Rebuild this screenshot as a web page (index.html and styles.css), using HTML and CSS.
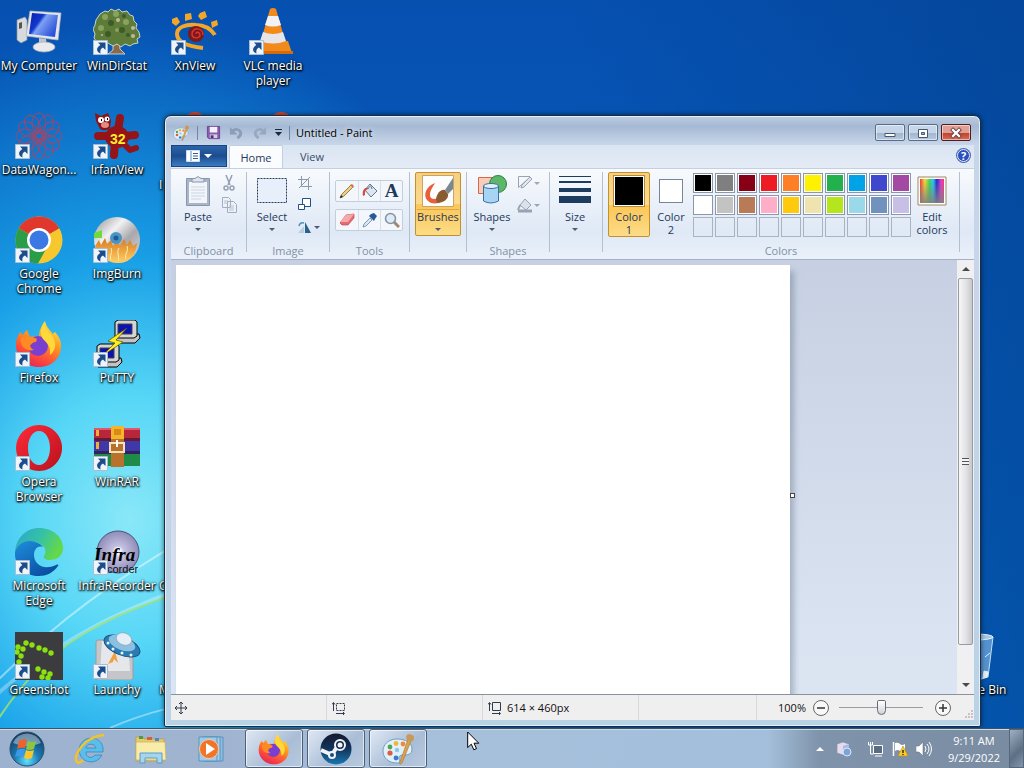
FILE: index.html
```
<!DOCTYPE html>
<html lang="en">
<head>
    <meta charset="utf-8">
    <title>Untitled - Paint</title>
    <link rel="stylesheet" href="styles.css">
</head>
<body>
<!-- shared artwork -->
<svg class="defs" aria-hidden="true">
    <defs>
        <linearGradient id="gFox" x1="0.8" y1="0" x2="0.3" y2="1">
            <stop offset="0" stop-color="#fff04a"/><stop offset="0.4" stop-color="#ff9a1f"/><stop offset="0.75" stop-color="#ff4a3a"/><stop offset="1" stop-color="#e0255c"/>
        </linearGradient>
        <linearGradient id="gScreen" x1="0" y1="0" x2="1" y2="0.6">
            <stop offset="0" stop-color="#0a1fae"/><stop offset="0.4" stop-color="#1238cc"/><stop offset="0.5" stop-color="#7fa0f4"/><stop offset="1" stop-color="#2a52d8"/>
        </linearGradient>
        <linearGradient id="gSilver" x1="0" y1="0" x2="1" y2="1">
            <stop offset="0" stop-color="#8c8c90"/><stop offset="0.35" stop-color="#f2f2f4"/><stop offset="0.6" stop-color="#a8a8ac"/><stop offset="1" stop-color="#dcdce0"/>
        </linearGradient>
        <linearGradient id="gFlame" x1="0" y1="0" x2="0" y2="1">
            <stop offset="0" stop-color="#d9791c"/><stop offset="1" stop-color="#ffd06a"/>
        </linearGradient>
        <linearGradient id="gOpera" x1="0" y1="0" x2="1" y2="1">
            <stop offset="0" stop-color="#ff2a3a"/><stop offset="1" stop-color="#b8121c"/>
        </linearGradient>
        <linearGradient id="gEdge" x1="0" y1="0" x2="1" y2="0.4">
            <stop offset="0" stop-color="#2aa6c8"/><stop offset="0.55" stop-color="#35c1a8"/><stop offset="1" stop-color="#62d84a"/>
        </linearGradient>
        <linearGradient id="gEdgeBlue" x1="0" y1="0" x2="0.7" y2="1">
            <stop offset="0" stop-color="#1f8fdc"/><stop offset="1" stop-color="#0a4ca0"/>
        </linearGradient>
        <radialGradient id="gInfra">
            <stop offset="0" stop-color="#fff"/><stop offset="0.3" stop-color="#c4c0e0"/><stop offset="1" stop-color="#8f8cb8"/>
        </radialGradient>
        <radialGradient id="gOrb" cx="0.5" cy="0.85" r="0.8">
            <stop offset="0" stop-color="#5fe0ff"/><stop offset="0.45" stop-color="#1c7cb4"/><stop offset="1" stop-color="#123e66"/>
        </radialGradient>
        <linearGradient id="gHue">
            <stop offset="0" stop-color="#f33"/><stop offset="0.2" stop-color="#fd3"/><stop offset="0.4" stop-color="#3d5"/><stop offset="0.55" stop-color="#2cf"/><stop offset="0.7" stop-color="#22c"/><stop offset="0.88" stop-color="#e3d"/><stop offset="1" stop-color="#f36"/>
        </linearGradient>
        <linearGradient id="gGrey" x1="0" y1="0" x2="0" y2="1">
            <stop offset="0" stop-color="#808080" stop-opacity="0"/><stop offset="1" stop-color="#808080" stop-opacity="0.9"/>
        </linearGradient>
        <linearGradient id="gSteam" x1="0" y1="0" x2="0" y2="1">
            <stop offset="0" stop-color="#14182c"/><stop offset="0.5" stop-color="#12355e"/><stop offset="1" stop-color="#1a78b0"/>
        </linearGradient>
        <symbol id="shortcut" viewBox="0 0 15 15">
            <path d="M.5.5h14v14H.5z" fill="#eef4fa" stroke="#a9bdd2"/>
            <path d="M5 2.5h7.500v7.500L10 7.600C7.500 9 7 10.500 7.500 13.500 3.500 12 2.500 8 7.300 5z" fill="#1c4c8c"/>
        </symbol>
        <symbol id="firefox" viewBox="0 0 48 48">
            <path d="M24 47C11 47 1 37 1 25c0-6 2-9 4-13l3 3c1-2 2-3 4-5l3 7c3-1 6-1 9 0 0-7 3-12 6-16 1 6 5 9 8 13l2-2c4 5 6 8 6 14C46 38 37 47 24 47z" fill="url(#gFox)"/>
            <circle cx="23" cy="26" r="10" fill="#7b3fd0"/>
            <path d="M6 18c5-2 10-2 16 1l-1 3c-3 0-5 2-6 4 1 2 2 3 4 4-4 1-8 0-11-3-2-3-3-6-2-9z" fill="#ff8a22"/>
            <path d="M29 3c1 7 7 10 10 16 3 7 0 13-4 16 1-9-3-12-7-16-4-5-2-11 1-16z" fill="#ffd83a"/>
        </symbol>
        <symbol id="palette" viewBox="0 0 32 32">
            <path d="M15 6C6 6 1 12 1 18c0 7 6 12 14 12 3 0 3-2 2-4s1-4 4-4c4 0 9 0 9-6 0-6-6-10-15-10z" fill="#e2f0fa" stroke="#6fa0c6"/>
            <circle cx="8" cy="20" r="2.600" fill="#e05a4a"/><circle cx="8" cy="14" r="2.400" fill="#4aa850"/>
            <circle cx="14" cy="10.500" r="2.400" fill="#f0b832"/><circle cx="21" cy="11" r="2.400" fill="#f08a3a"/>
            <circle cx="14" cy="25" r="2.400" fill="#3a7cd0"/><circle cx="15" cy="17" r="2.200" fill="#88c8e8"/>
            <path d="M26 6l3 2-9 22c-2 2-3 1-2-1z" fill="#dca24c" stroke="#a8722c" stroke-width=".6"/>
            <path d="M25 7c-2-4 0-6 3-6l4 2c1 3-1 5-3 6z" fill="#c79a5a"/>
        </symbol>
    </defs>
</svg>

<main class="desktop">
    <svg class="streaks" viewBox="0 0 240 240" aria-hidden="true">
        <g fill="none">
            <path d="M-5 195C50 140 110 90 240 20" stroke="#fff" stroke-opacity=".45" stroke-width="2"/>
            <path d="M-5 208C60 150 120 120 240 80" stroke="#fff" stroke-opacity=".3" stroke-width="4"/>
            <path d="M-5 236C50 150 110 122 240 88" stroke="#9be36c" stroke-opacity=".85" stroke-width="2"/>
            <path d="M110 240C150 222 190 215 240 205" stroke="#fff" stroke-opacity=".4" stroke-width="2"/>
        </g>
    </svg>

    <div class="icons">
        <div class="icon">
            <svg class="art" viewBox="0 0 48 48">
                <path d="M2 12l8-3 2 3v20l-6 3-4-3z" fill="#d8dade" stroke="#8f949c" stroke-width=".7"/>
                <path d="M4 15l3-1v6l-3 1z" fill="#555"/>
                <path d="M15 3l31 2-3 27-32-4z" fill="#e4e6ea" stroke="#b3b7be" stroke-width=".7"/>
                <path d="M17 5l26 2-3 22-26-3z" fill="url(#gScreen)"/>
                <path d="M24 30l7 1 1 7h-8z" fill="#c2c6cc"/>
                <ellipse cx="29" cy="39" rx="11" ry="5" fill="#e8eaee" stroke="#a9adb4" stroke-width=".7"/>
            </svg>
            <span class="name">My Computer</span>
        </div>
        <div class="icon">
            <svg class="art" viewBox="0 0 48 48">
                <path d="M20 27h6l1 14 5 5H15l5-4z" fill="#8c6a48" stroke="#dfe8ee" stroke-width=".8"/>
                <path d="M7 6l5-3 3 1 3-3 4 2 4-2 3 3 5-1 3 4 3 1 1 5 3 3-1 4 3 4 1 5-3 2 1 4-5 1-3 2-5-2-4 3-4-3-4 2-5-3-4 2-4-4-3 1-3-4 1-4-2-5 2-4 1-5z" fill="#5d7c3a" stroke="#d3e0d8" stroke-width=".9"/>
                <g fill="#89a35c"><circle cx="12" cy="9" r="3"/><circle cx="23" cy="6" r="3"/><circle cx="33" cy="14" r="3"/><circle cx="8" cy="20" r="3"/><circle cx="24" cy="22" r="2"/></g>
                <g fill="#3e5a28"><circle cx="18" cy="15" r="3"/><circle cx="29" cy="22" r="3"/><circle cx="15" cy="26" r="3"/><circle cx="31" cy="8" r="2"/><circle cx="35" cy="27" r="2"/></g>
                <g fill="#c3b896"><circle cx="40" cy="28" r="2"/><circle cx="40" cy="20" r="2"/><circle cx="25" cy="12" r="2"/><circle cx="9" cy="27" r="1"/></g>
                <use href="#shortcut" y="32" width="15" height="15"/>
            </svg>
            <span class="name">WinDirStat</span>
        </div>
        <div class="icon">
            <svg class="art" viewBox="0 0 48 48">
                <g fill="#f2a62a"><path d="M1 11l5-2 3 5-4 4-4-3z"/><path d="M14 6l6-1 1 6-7 2z"/><path d="M29 5l5-2 2 6-6 3-3-4z"/><path d="M40 14l6-2 1 5-6 3z"/></g>
                <path d="M32 40C14 38 6 33 6 26s9-10 19-9c9 0 15 4 19 10" fill="none" stroke="#f2a62a" stroke-width="4"/>
                <circle cx="25" cy="26" r="8" fill="#7a1a1c"/>
                <path d="M25 26c0-3 4-2 4 1 0 4-8 4-8-1 0-7 11-7 11 1" fill="none" stroke="#e0352a" stroke-width="1.500"/>
                <path d="M33 37l11-10M36 28l7 8" stroke="#24508c" stroke-width="1"/>
                <use href="#shortcut" y="32" width="15" height="15"/>
            </svg>
            <span class="name">XnView</span>
        </div>
        <div class="icon">
            <svg class="art" viewBox="0 0 48 48">
                <path d="M9 33h30l4 12H6z" fill="#f08a1a"/><path d="M6 43h38v3H6z" fill="#d86a0c"/>
                <path d="M21 1q3-2 6 0l10 35q-13 8-26 0z" fill="#f58a1c"/>
                <path d="M19 8h10l3 9q-8 3-16 0z" fill="#f2f2f4"/>
                <path d="M14 24q10 4 20 0l3 9q-13 5-26 0z" fill="#e6e6ea"/>
                <use href="#shortcut" y="32" width="15" height="15"/>
            </svg>
            <span class="name">VLC media player</span>
        </div>

        <div class="icon">
            <svg class="art" viewBox="0 0 48 48">
                <g fill="none" stroke="#c43c52" stroke-width=".8">
                    <circle cx="24" cy="24" r="7"/>
                    <g id="petals"><ellipse cx="24" cy="11" rx="7" ry="10"/><ellipse cx="24" cy="37" rx="7" ry="10"/><ellipse cx="11" cy="24" rx="10" ry="7"/><ellipse cx="37" cy="24" rx="10" ry="7"/></g>
                    <use href="#petals" transform="rotate(30 24 24)"/>
                    <use href="#petals" transform="rotate(60 24 24)"/>
                </g>
                <use href="#shortcut" y="32" width="15" height="15"/>
            </svg>
            <span class="name">DataWagon...</span>
        </div>
        <div class="icon">
            <svg class="art" viewBox="0 0 48 48">
                <g fill="none" stroke="#951417" stroke-width="8" stroke-linecap="round" stroke-linejoin="round">
                    <path d="M25 18l2-12M16 24H5M22 30l-1 13M32 24l10-1"/>
                    <path d="M31 32l6 6 6-2" stroke-width="6"/>
                </g>
                <ellipse cx="24" cy="25" rx="12" ry="11" fill="#951417"/>
                <path d="M2 1l6 3 7-3 3 7-1 8q-5 4-10 1L3 9z" fill="#8a1416"/>
                <circle cx="8" cy="8" r="3" fill="#fff"/><circle cx="14" cy="7" r="2.500" fill="#fff"/><path d="M8 8h1M14 7h1" stroke="#000" stroke-width="2"/>
                <ellipse cx="12" cy="13" rx="4" ry="3" fill="#e58a80"/>
                <text class="art-32" x="17" y="32">32</text>
                <use href="#shortcut" y="32" width="15" height="15"/>
            </svg>
            <span class="name">IrfanView</span>
        </div>
        <div class="icon">
            <svg class="art" viewBox="0 0 48 48"><circle cx="24" cy="12" r="12" fill="#d8452a"/></svg>
            <span class="name cut low">I</span>
        </div>
        <div class="icon">
            <svg class="art" viewBox="0 0 48 48"><circle cx="32" cy="12" r="12" fill="#d8452a"/></svg>
        </div>

        <div class="icon">
            <svg class="art" viewBox="0 0 48 48">
                <circle cx="24" cy="24" r="23.500" fill="#f7c82e"/>
                <path d="M24 24L3.600 12.300A23.500 23.500 0 0 1 44.400 12.300z" fill="#e0382c"/>
                <path d="M24 24l-20.400-11.700A23.500 23.500 0 0 0 23 47.500l10-18z" fill="#2b9c48"/>
                <circle cx="24" cy="24" r="12" fill="#fff"/><circle cx="24" cy="24" r="9.500" fill="#3a78e4"/>
                <use href="#shortcut" y="32" width="15" height="15"/>
            </svg>
            <span class="name">Google Chrome</span>
        </div>
        <div class="icon">
            <svg class="art" viewBox="0 0 48 48">
                <circle cx="24" cy="24" r="23" fill="url(#gSilver)"/>
                <path d="M1 17l8-3v8H1z" fill="#6ddc3a"/>
                <path d="M2 30l4-6 2 5 4-7 2 6 4-4 2 6 4-5 3 5 4-7 3 6 3-5 3 6 4-3q-2 20-19 20Q8 46 2 30z" fill="url(#gFlame)"/>
                <g stroke="#fff0a8" fill="none"><path d="M18 44c-2-5 2-7 0-12M25 45c2-5-2-8 1-13M33 43c-2-5 3-7 1-13"/></g>
                <circle cx="23" cy="22" r="6" fill="#4a94c4"/><circle cx="23" cy="22" r="2.500" fill="#1f5c94"/>
                <use href="#shortcut" y="32" width="15" height="15"/>
            </svg>
            <span class="name">ImgBurn</span>
        </div>
        <div class="icon"></div>
        <div class="icon"></div>

        <div class="icon">
            <svg class="art" viewBox="0 0 48 48"><use href="#firefox" width="48" height="48"/><use href="#shortcut" y="32" width="15" height="15"/></svg>
            <span class="name">Firefox</span>
        </div>
        <div class="icon">
            <svg class="art" viewBox="0 0 48 48">
                <g id="pc">
                    <path d="M23 17l3-3h20l1 4-5 5H23z" fill="#c4c4c4" stroke="#000"/>
                    <path d="M22 2l3-2h17l2 2v14l-3 2H22z" fill="#d4d4d4" stroke="#000"/>
                    <path d="M25 4h14v10H25z" fill="#0a12b4" stroke="#444"/>
                </g>
                <use href="#pc" x="-18" y="24"/>
                <path d="M34 8L15 21l7 2-13 13 21-14-7-2z" fill="#ffee1e" stroke="#5c5200" stroke-width=".7"/>
                <use href="#shortcut" y="32" width="15" height="15"/>
            </svg>
            <span class="name">PuTTY</span>
        </div>
        <div class="icon"></div>
        <div class="icon"></div>

        <div class="icon">
            <svg class="art" viewBox="0 0 48 48">
                <path fill-rule="evenodd" d="M24 1a23 23 0 1 0 .1 0zm0 6c7 0 11 8 11 17s-4 17-11 17-11-8-11-17S17 7 24 7z" fill="url(#gOpera)"/>
                <use href="#shortcut" y="32" width="15" height="15"/>
            </svg>
            <span class="name">Opera Browser</span>
        </div>
        <div class="icon">
            <svg class="art" viewBox="0 0 48 48">
                <path d="M1 4h46v13H1z" fill="#b8263c"/><path d="M1 17h46v13H1z" fill="#4038a8"/><path d="M1 30h46v12H1z" fill="#1e8c48"/>
                <path d="M1 14h46v3H1zM1 27h46v3H1z" fill="#2a1430" opacity=".6"/><path d="M1 4h46v2H1z" fill="#e0566a"/>
                <path d="M3 6h3v6H3zM3 18h3v7H3z" fill="#f0b038"/>
                <path d="M18 2h13v41H18z" fill="#b8722c"/><path d="M18 2h13v13H18z" fill="#f2b52c"/><path d="M21 5h7v6h-7z" fill="#d88c14"/>
                <path d="M17 19h14v9H17z" fill="none" stroke="#f4e2b8" stroke-width="2"/><path d="M24 16v7" stroke="#fff" stroke-width="2"/>
                <use href="#shortcut" y="32" width="15" height="15"/>
            </svg>
            <span class="name">WinRAR</span>
        </div>
        <div class="icon"></div>
        <div class="icon"></div>

        <div class="icon">
            <svg class="art" viewBox="0 0 48 48">
                <path d="M0 24C1 10 11 0 24 0c14 0 24 9 24 20 0 8-6 12-13 12-5 0-7-2-6-4 3-5 1-11-6-13C14 12 4 16 0 24z" fill="url(#gEdge)"/>
                <path d="M0 24c3-9 12-13 20-10 4 1 7 3 8 5-6-2-9 3-9 8 0 9 9 16 22 10 2-1 3 0 2 1-5 7-12 10-19 10C10 48-1 38 0 24z" fill="url(#gEdgeBlue)"/>
                <use href="#shortcut" y="32" width="15" height="15"/>
            </svg>
            <span class="name">Microsoft Edge</span>
        </div>
        <div class="icon">
            <svg class="art" viewBox="0 0 48 48">
                <circle cx="25" cy="24" r="21" fill="url(#gInfra)" stroke="#4c5478"/>
                <circle cx="25" cy="23" r="4" fill="#eef4ff"/>
                <text class="art-infra" x="1" y="33">Infra</text>
                <text class="art-corder" x="14" y="45">corder</text>
                <use href="#shortcut" y="32" width="15" height="15"/>
            </svg>
            <span class="name">InfraRecorder</span>
        </div>
        <div class="icon"><span class="art"></span><span class="name cut">C</span></div>
        <div class="icon"></div>

        <div class="icon">
            <svg class="art" viewBox="0 0 48 48">
                <path d="M0 0h48v48H0z" fill="#3c3c3e"/>
                <g fill="#8be010">
                    <circle cx="3" cy="15" r="2.700"/><circle cx="11" cy="11" r="2.700"/><circle cx="17" cy="13" r="2.700"/><circle cx="24" cy="16" r="2.700"/><circle cx="30" cy="18" r="2.700"/><circle cx="36" cy="21" r="2.700"/>
                    <circle cx="8" cy="17" r="2.700"/><circle cx="6" cy="24" r="2.700"/><circle cx="2" cy="20" r="2.700"/><circle cx="4" cy="30" r="2.700"/>
                    <circle cx="23" cy="37" r="2.700"/><circle cx="29" cy="40" r="2.700"/><circle cx="35" cy="42" r="2.700"/><circle cx="27" cy="45" r="2.700"/><circle cx="33" cy="46" r="2.700"/>
                </g>
                <use href="#shortcut" y="32" width="15" height="15"/>
            </svg>
            <span class="name">Greenshot</span>
        </div>
        <div class="icon">
            <svg class="art" viewBox="0 0 48 48">
                <path d="M3 10q0-2 2-2h33q2 0 2 2v36q0 2-2 2H5q-2 0-2-2z" fill="#c4c6ca" stroke="#9a9ca2"/>
                <path d="M9 9h26l2 30H7z" fill="#e6e7ea"/>
                <path d="M22 19l-7 13 5-2 1-3 4 4z" fill="#f0a040"/>
                <ellipse cx="29" cy="14" rx="19" ry="9" transform="rotate(22 29 14)" fill="#2a7cb4" stroke="#184c7c"/>
                <ellipse cx="29" cy="11" rx="14" ry="7" transform="rotate(22 29 11)" fill="#8cc0e0"/>
                <ellipse cx="31" cy="7" rx="8" ry="6" transform="rotate(22 31 7)" fill="#e4eef6" stroke="#8aa4b8" stroke-width=".7"/>
                <g fill="#e8f6ff"><circle cx="15" cy="11" r="1.500"/><circle cx="20" cy="17" r="1.500"/><circle cx="29" cy="21" r="1.500"/><circle cx="38" cy="23" r="1.500"/></g>
                <use href="#shortcut" y="32" width="15" height="15"/>
            </svg>
            <span class="name">Launchy</span>
        </div>
        <div class="icon"><span class="art"></span><span class="name cut">M</span></div>
    </div>

    <div class="icon recycle">
        <svg class="art" viewBox="0 0 48 48">
            <path d="M7 5h35l-5 40q-13 5-25 0z" fill="#7fb4e4" fill-opacity=".65" stroke="#c4e0f6"/>
            <ellipse cx="25" cy="5" rx="17" ry="3" fill="#a4c8e4" stroke="#e4f2fc"/>
            <path d="M34 25l5-4M33 39l4 1-1 5-4 1z" stroke="#e4f2fc" fill="#e8eef2"/>
        </svg>
        <span class="name">Recycle Bin</span>
    </div>

    <section class="window">
        <header class="titlebar">
            <svg class="app-icon" viewBox="0 0 32 32"><use href="#palette" width="32" height="32"/></svg>
            <i class="bar"></i>
            <button class="quick" aria-label="Save">
                <svg viewBox="0 0 16 16"><path d="M1.500 1.500h13v13H3l-1.500-1.500z" fill="#8a5cb0" stroke="#6a4490"/><path d="M4 2h8v6H4z" fill="#f2f0f8"/><path d="M4 10h8v4H4z" fill="#d4cce4"/><path d="M5 11h3v3H5z" fill="#4c3070"/></svg>
            </button>
            <button class="quick" aria-label="Undo">
                <svg viewBox="0 0 16 16"><path d="M4 6c7-4 12 3 5 8" fill="none" stroke="#8c9eb6" stroke-width="3"/><path d="M1 2v8h8z" fill="#8c9eb6"/></svg>
            </button>
            <button class="quick" aria-label="Redo">
                <svg viewBox="0 0 16 16"><path d="M12 6C5 2 0 9 7 14" fill="none" stroke="#98a9bf" stroke-width="3"/><path d="M15 2v8H7z" fill="#98a9bf"/></svg>
            </button>
            <button class="quick customize" aria-label="Customize Quick Access Toolbar">
                <svg viewBox="0 0 8 8"><path d="M0 0h7v1H0zM0 3h7L3.500 7z" fill="#1c2838"/></svg>
            </button>
            <i class="bar"></i>
            <h1>Untitled - Paint</h1>
            <div class="caption">
                <button aria-label="Minimize"><svg viewBox="0 0 16 14"><path d="M3 7.500h10v3H3z" fill="#fff" stroke="#46566e"/></svg></button>
                <button aria-label="Maximize"><svg viewBox="0 0 16 14"><path fill-rule="evenodd" d="M3.500 3.500h9v8h-9zM6.500 6.500h3v2h-3z" fill="#fff" stroke="#46566e"/></svg></button>
                <button class="close" aria-label="Close"><svg viewBox="0 0 16 14"><path d="M5 4l6 6M11 4l-6 6" stroke="#5c3034" stroke-width="4" stroke-linecap="square"/><path d="M5 4l6 6M11 4l-6 6" stroke="#fff" stroke-width="2.400" stroke-linecap="square"/></svg></button>
            </div>
        </header>

        <nav class="tabs">
            <button class="file-tab" aria-label="Paint menu">
                <svg viewBox="0 0 26 12"><path d="M.5.500h13v11H.5z" fill="#fff" stroke="#cddcf0"/><path d="M5 1v10" stroke="#5a8cc8"/><path d="M7 3.500h5M7 6h5M7 8.500h5" stroke="#2c5c9c"/><path d="M18 4h8l-4 4z" fill="#fff"/></svg>
            </button>
            <button class="tab active">Home</button>
            <button class="tab">View</button>
            <button class="help" aria-label="Help">?</button>
        </nav>

        <div class="ribbon">
            <div class="group clipboard">
                <div class="tools">
                    <button class="big">
                        <svg viewBox="0 0 32 32"><path d="M4.500 3.500h23v27h-23z" fill="#a9b6c8" stroke="#8796ac"/><path d="M7 7h18v21H7z" fill="#f2f5fa"/><path d="M9 12h14M9 15h14M9 18h14M9 21h14M9 24h10" stroke="#ccd5e2"/><path d="M10 7V4l4-1q2-3 4 0l4 1v3z" fill="#dfe5ee" stroke="#8796ac"/></svg>
                        <span>Paste</span><i class="arrow"></i>
                    </button>
                    <div class="stack">
                        <button aria-label="Cut"><svg viewBox="0 0 16 16"><path d="M5 0l4 10M11 0L7 10" stroke="#94a0b2" stroke-width="1.500"/><circle cx="5" cy="13" r="2" fill="none" stroke="#94a0b2" stroke-width="1.500"/><circle cx="11" cy="13" r="2" fill="none" stroke="#94a0b2" stroke-width="1.500"/></svg></button>
                        <button aria-label="Copy"><svg viewBox="0 0 16 16"><path d="M1.500.500h6l2 2v8h-8zM6.500 4.500h6l3 3v8h-9z" fill="#eef2f8" stroke="#a2aebf"/><path d="M3 4h4M3 6h3M8 9h5M8 11h5M8 13h5" stroke="#b8c2d0"/></svg></button>
                    </div>
                </div>
                <div class="caption-text">Clipboard</div>
            </div>

            <div class="group image">
                <div class="tools">
                    <button class="big">
                        <svg viewBox="0 0 32 32"><path d="M1.500 3.500h29v24h-29z" fill="#e6effa" stroke="#243c5c" stroke-dasharray="2 1"/></svg>
                        <span>Select</span><i class="arrow"></i>
                    </button>
                    <div class="stack">
                        <button aria-label="Crop"><svg viewBox="0 0 16 16"><path d="M4.500 1v10.500H15M1 4.500h10.500V15M2 13L13 2" fill="none" stroke="#8b98ab"/></svg></button>
                        <button aria-label="Resize"><svg viewBox="0 0 16 16"><path d="M5.500 1.500h8v8h-8z" fill="#fff" stroke="#22508a"/><path d="M1.500 7.500h6v5h-6z" fill="#fff" stroke="#22508a"/></svg></button>
                        <button class="wide" aria-label="Rotate"><svg viewBox="0 0 16 16"><path d="M1 14h6V7z" fill="#b9cde0"/><path d="M8 14h6L8 3z" fill="#28628c"/><path d="M2 7q1-4 5-3" fill="none" stroke="#4a94c0" stroke-width="1.500"/></svg><i class="arrow"></i></button>
                    </div>
                </div>
                <div class="caption-text">Image</div>
            </div>

            <div class="group drawing">
                <div class="tools rows">
                    <div class="row">
                        <button aria-label="Pencil"><svg viewBox="0 0 16 16"><path d="M1 15l2-4 9-9 2 2-9 9z" fill="#f2d078" stroke="#7a6648" stroke-width=".8"/><path d="M1 15l1-3 2 2z" fill="#222"/><path d="M11 2l2-1 2 2-1 2z" fill="#c47a5c"/></svg></button>
                        <button aria-label="Fill with color"><svg viewBox="0 0 16 16"><path d="M8 1l7 7-6 6-6-7z" fill="#dbe6f2" stroke="#66788e"/><path d="M6 6q3-6 4 0" fill="none" stroke="#66788e"/><path d="M6 5C2 4 0 8 1 13l2-1c0-3 0-5 3-6z" fill="#d04c48"/></svg></button>
                        <button class="text-tool" aria-label="Text">A</button>
                    </div>
                    <div class="row">
                        <button aria-label="Eraser"><svg viewBox="0 0 16 16"><path d="M1 11l6-8 8-1v4l-6 7H3z" fill="#e86a70" stroke="#c04c54" stroke-width=".7"/><path d="M1 10l6-7 8-1-6 8z" fill="#f7a8aa"/></svg></button>
                        <button aria-label="Color picker"><svg viewBox="0 0 16 16"><path d="M1 15l1-3 6-6 2 2-6 6z" fill="#d6e8f4" stroke="#6a84a0" stroke-width=".8"/><path d="M7 4l5 5 1-2 2-3-3-3-3 1z" fill="#28589c"/></svg></button>
                        <button aria-label="Magnifier"><svg viewBox="0 0 16 16"><path d="M10 10l5 5" stroke="#a08a6a" stroke-width="3"/><circle cx="6.500" cy="6.500" r="5" fill="#dcebf6" stroke="#8894a4" stroke-width="1.600"/></svg></button>
                    </div>
                </div>
                <div class="caption-text">Tools</div>
            </div>

            <div class="group brushes">
                <div class="tools">
                    <button class="big chosen split">
                        <svg viewBox="0 0 32 32"><path d="M.5.500h31v31H.5z" fill="#fdfdfd" stroke="#c8a468"/><path d="M13 8C4 11 1 20 5 25c4 5 12 4 15 1l-4-3c-4 2-8 1-8-3 0-5 3-8 5-12z" fill="#e8603a"/><path d="M14 24c1-6 5-10 9-9l3 4c1 5-5 9-11 9z" fill="#8a5a30"/><path d="M23 15L31 3v11l-5 5z" fill="#7a8894"/></svg>
                        <span>Brushes</span><i class="arrow"></i>
                    </button>
                </div>
            </div>

            <div class="group shapes">
                <div class="tools">
                    <button class="big">
                        <svg viewBox="0 0 32 32"><path d="M2.500 2.500h16v16h-16z" fill="#f8cdb8" stroke="#d8684a"/><circle cx="22" cy="9" r="8.500" fill="#5cb868" stroke="#2c8444"/><path d="M7.500 11v15q7 4 15 0V11z" fill="#a8d4f4" stroke="#3a6ea8"/><ellipse cx="15" cy="11" rx="7.500" ry="2.500" fill="#e2f2fc" stroke="#3a6ea8"/></svg>
                        <span>Shapes</span><i class="arrow"></i>
                    </button>
                    <div class="stack faded">
                        <button class="wide" aria-label="Outline"><svg viewBox="0 0 16 16"><path d="M13 1.500H1.500v11L12 3" fill="none" stroke="#98a4b4"/><path d="M4 13l1-3 8-8 2 2-8 8z" fill="#e2e7ee" stroke="#98a4b4"/></svg><i class="arrow"></i></button>
                        <button class="wide" aria-label="Fill"><svg viewBox="0 0 16 16"><path d="M8 2l6 6-5 5-6-5z" fill="#dce2ea" stroke="#98a4b4"/><path d="M1 14h14" stroke="#98a4b4" stroke-width="3"/><path d="M3 8l-2 5" stroke="#98a4b4" stroke-width="2"/></svg><i class="arrow"></i></button>
                    </div>
                </div>
                <div class="caption-text">Shapes</div>
            </div>

            <div class="group size">
                <div class="tools">
                    <button class="big">
                        <svg viewBox="0 0 32 32"><path d="M0 1h32v1H0zM0 6h32v2H0zM0 13h32v4H0zM0 21h32v7H0z" fill="#1e3c60"/></svg>
                        <span>Size</span><i class="arrow"></i>
                    </button>
                </div>
            </div>

            <div class="group colors">
                <div class="tools">
                    <button class="big chosen"><i class="swatch black"></i><span>Color<br>1</span></button>
                    <button class="big second"><i class="swatch white"></i><span>Color<br>2</span></button>
                    <div class="palette">
                        <button style="background:#000"></button><button style="background:#7f7f7f"></button><button style="background:#880015"></button><button style="background:#ed1c24"></button><button style="background:#ff7f27"></button><button style="background:#fff200"></button><button style="background:#22b14c"></button><button style="background:#00a2e8"></button><button style="background:#3f48cc"></button><button style="background:#a349a4"></button>
                        <button style="background:#fff"></button><button style="background:#c3c3c3"></button><button style="background:#b97a57"></button><button style="background:#ffaec9"></button><button style="background:#ffc90e"></button><button style="background:#efe4b0"></button><button style="background:#b5e61d"></button><button style="background:#99d9ea"></button><button style="background:#7092be"></button><button style="background:#c8bfe7"></button>
                        <button class="empty"></button><button class="empty"></button><button class="empty"></button><button class="empty"></button><button class="empty"></button><button class="empty"></button><button class="empty"></button><button class="empty"></button><button class="empty"></button><button class="empty"></button>
                    </div>
                    <button class="big edit">
                        <svg viewBox="0 0 32 32"><path d="M2 2h28v28H2z" fill="#fff" stroke="#a0885c"/><path d="M4 4h24v24H4z" fill="url(#gHue)"/><path d="M4 4h24v24H4z" fill="url(#gGrey)"/></svg>
                        <span>Edit<br>colors</span>
                    </button>
                </div>
                <div class="caption-text">Colors</div>
            </div>
        </div>

        <div class="work">
            <div class="canvas-area">
                <div class="paper"><i class="handle"></i></div>
            </div>
            <div class="scrollbar">
                <i class="up"></i>
                <div class="thumb"><i class="grip"></i></div>
                <i class="down"></i>
            </div>
        </div>

        <footer class="status">
            <div class="cell"><svg viewBox="0 0 14 14"><path d="M7 1v12M1 7h12M5 3l2-2 2 2M5 11l2 2 2-2M3 5L1 7l2 2M11 5l2 2-2 2" fill="none" stroke="#333a4c"/></svg></div>
            <div class="cell"><svg viewBox="0 0 14 14"><path d="M4.500 2.500h8v7h-8z" fill="none" stroke="#333a4c" stroke-dasharray="2 1"/><path d="M1.500 10V2M0 3.500l1.500-2L3 3.500M4 12.500h8M11 11l1.500 1.500L11 14" fill="none" stroke="#333a4c"/></svg></div>
            <div class="cell"><svg viewBox="0 0 14 14"><path d="M4.500 1.500h8v8h-8z" fill="none" stroke="#333a4c"/><path d="M1.500 10V2M0 3.500l1.500-2L3 3.500M4 12.500h8M11 11l1.500 1.500L11 14" fill="none" stroke="#333a4c"/></svg>614 × 460px</div>
            <div class="cell last"></div>
            <div class="zoom">
                <label for="zoom">100%</label>
                <button class="round" aria-label="Zoom out"><svg viewBox="0 0 16 16"><circle cx="8" cy="8" r="7.500" fill="#f8f8f8" stroke="#666"/><path d="M4 8h8" stroke="#333" stroke-width="1.500"/></svg></button>
                <input type="range" id="zoom" min="0" max="100" value="50">
                <button class="round" aria-label="Zoom in"><svg viewBox="0 0 16 16"><circle cx="8" cy="8" r="7.500" fill="#f8f8f8" stroke="#666"/><path d="M4 8h8M8 4v8" stroke="#333" stroke-width="1.500"/></svg></button>
                <svg class="corner" viewBox="0 0 10 10"><path d="M7 1h2v2H7zM4 4h2v2H4zM7 4h2v2H7zM1 7h2v2H1zM4 7h2v2H4zM7 7h2v2H7z" fill="#d0c0c4"/></svg>
            </div>
        </footer>
    </section>
</main>

<footer class="taskbar">
    <button class="start" aria-label="Start">
        <svg viewBox="0 0 36 36">
            <circle cx="18" cy="18" r="17" fill="url(#gOrb)" stroke="#2c4c6c"/>
            <path d="M4 12a15 15 0 0 1 28 0q-14 6-28 0z" fill="#fff" fill-opacity=".4"/>
            <path d="M10 10q4-3 8-1l-2 8q-4-1-8 1z" fill="#f0602a"/><path d="M19 10q4 2 8 0l-2 8q-4 2-8 0z" fill="#8cc63e"/>
            <path d="M8 19q4-2 8-1l-2 8q-4-2-8 0z" fill="#3a9ae8"/><path d="M17 19q4 2 8 0l-2 8q-4 2-8 0z" fill="#fcc62a"/>
        </svg>
    </button>
    <button class="pin" aria-label="Internet Explorer">
        <svg viewBox="0 0 32 32"><path d="M17 5a12 12 0 1 0 11 17h-7c-3 4-9 3-9-3h17C30 11 25 5 17 5zm-5 10c1-5 9-5 10 0z" fill="#5cbcea" stroke="#2a84bc" stroke-width=".7" fill-rule="evenodd"/><path d="M3 29C-2 22 12 3 30 2M3 29c2 2 4 0 6-2" fill="none" stroke="#f2c22c" stroke-width="2.500"/></svg>
    </button>
    <button class="pin" aria-label="Windows Explorer">
        <svg viewBox="0 0 32 32"><path d="M1 4h7l1 2h20v22H1z" fill="#e8cc6c" stroke="#b89c40" stroke-width=".7"/><path d="M4 3h4v3H4z" fill="#4a9c48"/><path d="M12 4h5v3h-5z" fill="#d4603c"/><path d="M20 5h4v3h-4z" fill="#4a88d0"/><path d="M1 9h29l1 18H1z" fill="#f8ecaa" stroke="#c8b05c" stroke-width=".7"/><path d="M5 30V20h22v10h-5v-5H10v5z" fill="#a4d4f0" stroke="#5c9cc4"/></svg>
    </button>
    <button class="pin" aria-label="Windows Media Player">
        <svg viewBox="0 0 32 32"><path d="M8 4h18v24H8z" fill="#8cbce0" stroke="#5a94c0"/><path d="M5 4h18v24H5z" fill="#a8d0ec" stroke="#5a94c0"/><path d="M2 4h18v24H2z" fill="#9cccec" stroke="#5a94c0"/><circle cx="12" cy="16" r="9.500" fill="#f0742a" stroke="#f8c8a0"/><path d="M9 10l9 6-9 6z" fill="#fff"/></svg>
    </button>
    <button class="task" aria-label="Firefox"><svg viewBox="0 0 48 48"><use href="#firefox" width="48" height="48"/></svg></button>
    <button class="task" aria-label="Steam">
        <svg viewBox="0 0 32 32"><circle cx="16" cy="16" r="15.500" fill="url(#gSteam)"/><path d="M1 17l9 4a4 4 0 0 1 3-1l4-6" fill="none" stroke="#f2f4f8" stroke-width="4"/><circle cx="20" cy="12" r="5" fill="#14284a" stroke="#f2f4f8" stroke-width="2"/><circle cx="20" cy="12" r="2.500" fill="#f2f4f8"/><circle cx="12" cy="22" r="4" fill="#f2f4f8"/><circle cx="12" cy="22" r="2" fill="#1a4c7c"/></svg>
    </button>
    <button class="task" aria-label="Paint"><svg viewBox="0 0 32 32"><use href="#palette" width="32" height="32"/></svg></button>

    <div class="tray">
        <svg class="chevron" viewBox="0 0 8 5"><path d="M0 5l4-4 4 4z" fill="#fff"/></svg>
        <svg viewBox="0 0 16 16"><path d="M1 3l6-2 6 2v9l-6 2-6-2z" fill="#e4dcec" stroke="#8a8cb0" stroke-width=".7"/><path d="M7 5v9l6-2V3z" fill="#a8bce0"/><circle cx="11" cy="11" r="4" fill="#7ca4d8" stroke="#d8e8f8"/></svg>
        <i class="gap"></i>
        <svg viewBox="0 0 16 16"><path d="M5.500 4.500h9v8h-9z" fill="#5c6c80" stroke="#fff"/><path d="M7 15h7M2.500 1v3M.5 1v3h4V1M2.500 4v9h3" fill="none" stroke="#fff"/></svg>
        <svg viewBox="0 0 16 16"><path d="M1.500 1v14" stroke="#fff" stroke-width="1.500"/><path d="M3 2q3-1 5 1t5 0v7q-3 2-5 0t-5 0z" fill="#fff"/><path d="M11 5l5 10H6z" fill="#fccc28" stroke="#b88c10" stroke-width=".6"/><path d="M11 9v3M11 13v1" stroke="#222" stroke-width="1.400"/></svg>
        <svg viewBox="0 0 16 16"><path d="M0 5h3l4-4v14l-4-4H0z" fill="#fff" stroke="#5a6a7e" stroke-width=".5"/><path d="M9 5q2 3 0 6M11 3q4 5 0 10M13 1q5 7 0 14" fill="none" stroke="#fff"/></svg>
        <time class="clock">9:11 AM<br>9/29/2022</time>
        <button class="show-desktop" aria-label="Show desktop"></button>
    </div>
</footer>

<svg class="pointer" viewBox="0 0 13 20" aria-hidden="true"><path d="M.7 1v15.500l3.600-3.300 2.500 5.600 2.700-1.200-2.500-5.400h4.800z" fill="#fff" stroke="#000"/></svg>
</body>
</html>
```
FILE: styles.css
```
* {
    box-sizing: border-box;
}
body {
    margin: 0;
    height: 100vh;
    display: flex;
    flex-direction: column;
    overflow: hidden;
    font: 11px/13px "Open Sans", "Noto Sans", sans-serif;
    color: #1e395b;
}
button {
    margin: 0;
    padding: 0;
    border: 0;
    background: none;
    font: inherit;
    color: inherit;
}
svg {
    display: block;
}
.defs {
    position: absolute;
    width: 0;
    height: 0;
}

/* desktop */
.desktop {
    position: relative;
    flex: 1;
    min-height: 0;
    overflow: hidden;
    background:
        radial-gradient(ellipse 420px 500px at 130px 520px, #8ae8f8 0%, #56d6f6 25%, rgba(28, 172, 238, 0.85) 52%, rgba(10, 120, 214, 0) 100%),
        linear-gradient(100deg, rgba(0, 0, 0, 0) 50%, rgba(0, 50, 110, 0.4) 100%),
        linear-gradient(#0650b0, #0668d0);
}
.streaks {
    position: absolute;
    left: 0;
    bottom: 0;
    width: 240px;
    height: 240px;
}
.icons {
    position: absolute;
    left: 0;
    top: 0;
    display: grid;
    grid-template-columns: repeat(4, 78px);
    grid-auto-rows: 104px;
}
.icon {
    padding-top: 8px;
    display: flex;
    flex-direction: column;
    align-items: center;
}
.art {
    width: 48px;
    height: 48px;
    flex: none;
}
.name {
    margin-top: 2px;
    font-size: 12px;
    line-height: 15px;
    text-align: center;
    color: #fff;
    text-shadow: 0 1px 2px #000, 1px 1px 2px #000, 0 0 3px rgba(0, 0, 0, 0.7);
}
.cut {
    align-self: flex-start;
    padding-left: 3px;
}
.low {
    margin-top: 17px;
}
.art-32 {
    font: bold 14px "Liberation Sans", sans-serif;
    fill: #ffee2a;
}
.art-infra {
    font: italic bold 19px "Liberation Serif", serif;
    fill: #000;
}
.art-corder {
    font: 11px "Liberation Sans", sans-serif;
    fill: #111;
}
.recycle {
    position: absolute;
    right: 10px;
    bottom: 0;
    width: 78px;
    height: 104px;
}

/* window */
.window {
    position: absolute;
    left: 164px;
    right: 43px;
    top: 115px;
    bottom: 1px;
    padding: 0 6px 6px;
    display: flex;
    flex-direction: column;
    border: 1px solid #1c2c40;
    border-radius: 7px 7px 2px 2px;
    background: linear-gradient(#bccde0, #a6bad5 10px, #c8d6e9 29px, #c8d4ea 200px, #b8d2e6);
    box-shadow: inset 0 0 0 1px #e6f0fa, 0 0 5px rgba(0, 0, 0, 0.6);
}
.titlebar {
    height: 29px;
    flex: none;
    display: flex;
    align-items: center;
    padding: 4px 3px 0 2px;
    gap: 6px;
}
.app-icon {
    width: 16px;
    height: 16px;
    margin-right: 2px;
}
.bar {
    width: 1px;
    height: 14px;
    background: #6f86a4;
}
.quick {
    padding-left: 2px;
}
.quick svg {
    width: 15px;
    height: 15px;
}
.customize svg {
    width: 8px;
    height: 8px;
}
.titlebar h1 {
    margin: 0;
    font-size: 11px;
    font-weight: normal;
    color: #000;
    text-shadow: 0 0 6px #fff;
}
.caption {
    margin-left: auto;
    display: flex;
    gap: 3px;
}
.caption button {
    width: 30px;
    height: 17px;
    display: flex;
    justify-content: center;
    align-items: center;
    border: 1px solid #586c88;
    border-radius: 2px;
    background: linear-gradient(#c6d6e8 50%, #9fb4ce 50%, #b6c9de);
    box-shadow: inset 0 0 0 1px rgba(255, 255, 255, 0.5);
}
.caption svg {
    width: 16px;
    height: 14px;
}
.caption .close {
    border-color: #501c1c;
    background: linear-gradient(#e0a096 50%, #c03c28 50%, #d4705c);
}

.tabs {
    height: 23px;
    flex: none;
    display: flex;
    align-items: stretch;
    background: linear-gradient(#dae5f2, #e3ebf6);
    color: #3c4c64;
}
.file-tab {
    width: 56px;
    margin: 0 2px 1px 0;
    display: flex;
    justify-content: center;
    align-items: center;
    border: 1px solid #1c4480;
    background: linear-gradient(#2c64a8, #1c4c90 50%, #3a7cc0);
}
.file-tab svg {
    width: 26px;
    height: 12px;
}
.tab {
    width: 54px;
    margin-right: 2px;
}
.tab.active {
    border: 1px solid #c0cfe2;
    border-bottom: 0;
    border-radius: 2px 2px 0 0;
    background: #fafcfe;
    color: #1e395b;
}
.help {
    align-self: center;
    width: 13px;
    height: 13px;
    margin: 0 4px 2px auto;
    border: 1px solid #e0ecff;
    border-radius: 50%;
    background: #2c50c0;
    box-shadow: 0 0 0 1px #4c68b0;
    font-size: 11px;
    line-height: 11px;
    font-weight: bold;
    color: #fff;
}

.ribbon {
    height: 92px;
    flex: none;
    display: flex;
    padding-top: 3px;
    border-top: 1px solid #c4d0e0;
    border-bottom: 1px solid #a3b1c4;
    background: linear-gradient(#f8fafd, #e9f0f9 40%, #dfe8f5 70%, #eaf1fa);
}
.group {
    flex: none;
    height: 80px;
    border-right: 1px solid #b4c0d2;
}
.tools {
    height: 71px;
    display: flex;
    align-items: flex-start;
}
.caption-text {
    line-height: 15px;
    text-align: center;
    color: #8290a6;
}
.big {
    width: 46px;
    display: flex;
    flex-direction: column;
    align-items: center;
    border: 1px solid transparent;
    border-radius: 2px;
    padding: 2px 0 0;
}
.big svg {
    width: 32px;
    height: 32px;
}
.big span {
    margin-top: 3px;
}
.arrow {
    border: 3px solid transparent;
    border-top-color: #4c5c74;
    border-bottom: 0;
}
.big .arrow {
    margin: 5px 0 4px;
}
.chosen {
    border-color: #c29228;
    background: linear-gradient(#f6cf80, #fcd98c 50%, #fcc656 51%, #fcdc88);
}
.split span {
    margin-top: 2px;
    border-top: 1px solid #dca84c;
}
.stack {
    display: flex;
    flex-direction: column;
    gap: 6px;
    padding-top: 3px;
}
.stack svg {
    width: 16px;
    height: 16px;
}
.stack .wide {
    display: flex;
    align-items: center;
    gap: 1px;
}
.faded .arrow {
    opacity: 0.5;
}
.clipboard {
    width: 76px;
}
.clipboard .tools {
    padding-left: 4px;
}
.image {
    width: 83px;
}
.image .tools,
.shapes .tools,
.size .tools {
    padding-left: 2px;
}
.image .stack,
.shapes .stack {
    padding-left: 2px;
}
.drawing {
    width: 80px;
}
.rows {
    flex-direction: column;
    gap: 7px;
    padding: 8px 0 0 5px;
}
.row {
    display: flex;
    border: 1px solid #c3cedd;
    border-radius: 2px;
    background: #f3f7fc;
}
.row button {
    width: 22px;
    height: 20px;
    display: flex;
    justify-content: center;
    align-items: center;
    border-left: 1px solid #d6deea;
}
.row button:first-child {
    border-left: 0;
}
.row svg {
    width: 16px;
    height: 16px;
}
.row .text-tool {
    font: bold 19px/20px "Liberation Serif", serif;
}
.brushes {
    width: 57px;
}
.brushes .tools {
    padding-left: 5px;
}
.shapes {
    width: 83px;
}
.size {
    width: 53px;
}
.colors {
    width: 357px;
}
.colors .tools {
    padding-left: 5px;
}
.colors .big {
    width: 42px;
}
.swatch {
    width: 32px;
    height: 32px;
    border: 1px solid #b0883c;
    background: #000;
    box-shadow: inset 0 0 0 1px #fff;
}
.swatch.white {
    width: 24px;
    height: 24px;
    margin: 4px;
    border-color: #77859a;
    background: #fff;
}
.palette {
    display: grid;
    grid-template-columns: repeat(10, 20px);
    grid-auto-rows: 20px;
    gap: 2px;
    margin: 1px 0 0 1px;
}
.palette button {
    border: 1px solid #8c98aa;
    box-shadow: inset 0 0 0 1px #fff;
}
.palette .empty {
    border-color: #a8b4c4;
    box-shadow: none;
}

.work {
    flex: 1;
    min-height: 0;
    display: flex;
}
.canvas-area {
    flex: 1;
    overflow: hidden;
    background: linear-gradient(#c6d0e2, #dce6f3);
}
.paper {
    position: relative;
    width: 614px;
    height: 460px;
    margin: 5px;
    background: #fff;
    box-shadow: 4px 6px 6px rgba(90, 105, 130, 0.4);
}
.handle {
    position: absolute;
    right: -5px;
    top: 50%;
    width: 5px;
    height: 5px;
    margin-top: -2px;
    border: 1px solid #444;
    background: #fff;
}
.scrollbar {
    width: 17px;
    display: flex;
    flex-direction: column;
    align-items: center;
    background: #f0f0f2;
}
.up,
.down {
    margin: 7px 0;
    border: 4px solid transparent;
    border-top: 0;
    border-bottom-color: #4a4a4a;
}
.down {
    margin-top: 38px;
    border-top: 4px solid #4a4a4a;
    border-bottom: 0;
}
.thumb {
    flex: 1;
    width: 15px;
    display: flex;
    justify-content: center;
    align-items: center;
    border: 1px solid #979ba2;
    border-radius: 2px;
    background: linear-gradient(90deg, #f6f6f6, #e4e4e6 50%, #c6c8cc);
}
.grip {
    width: 7px;
    height: 7px;
    background: repeating-linear-gradient(#555 0 1px, #f4f4f4 1px 3px);
}

.status {
    height: 26px;
    flex: none;
    display: flex;
    border-top: 1px solid #8a929e;
    background: #f0eff0;
    color: #111;
}
.cell {
    width: 156px;
    display: flex;
    align-items: center;
    gap: 5px;
    padding-left: 3px;
    border-right: 1px solid #d6d8dc;
}
.cell:nth-child(2),
.cell:nth-child(3) {
    padding-left: 5px;
}
.cell svg {
    width: 14px;
    height: 14px;
}
.cell.last {
    width: 118px;
}
.zoom {
    margin-left: auto;
    display: flex;
    align-items: center;
}
.zoom label {
    margin-right: 7px;
}
.round {
    width: 16px;
    height: 16px;
}
.zoom input {
    appearance: none;
    width: 92px;
    height: 16px;
    margin: 0 8px 0 6px;
    background: linear-gradient(#9a9ca0, #9a9ca0) center / 84px 1px no-repeat;
}
.zoom input::-webkit-slider-thumb {
    appearance: none;
    width: 9px;
    height: 15px;
    border: 1px solid #666c76;
    border-radius: 2px 2px 5px 5px;
    background: linear-gradient(#fff, #d0d2d6);
}
.corner {
    align-self: flex-end;
    width: 10px;
    height: 10px;
    margin: 0 0 1px 13px;
}

/* taskbar */
.taskbar {
    height: 40px;
    flex: none;
    display: flex;
    align-items: center;
    border-top: 1px solid #3c5468;
    background: linear-gradient(90deg, #9cb2ce, #a0b4d0 220px, #a6c0dc 440px, #a4bfdb 75%, #7f93aa 80%, #7a8ca2);
    box-shadow: inset 0 1px 0 #c8dcec;
}
.start {
    width: 36px;
    margin: 0 25px 0 9px;
}
.pin {
    width: 32px;
    margin: 0 15px 0 4px;
}
.pin + .pin {
    margin: 0 16px 0 14px;
}
.pin svg {
    width: 32px;
    height: 32px;
}
.task {
    width: 58px;
    height: 39px;
    margin-right: 4px;
    display: flex;
    justify-content: center;
    align-items: center;
    border: 1px solid #4c6078;
    border-radius: 3px;
    background: linear-gradient(135deg, #dfe8f4, #a9bdd6 60%, #b8cae0);
    box-shadow: inset 0 0 0 1px rgba(255, 255, 255, 0.6);
}
.task svg {
    width: 32px;
    height: 32px;
}
.tray {
    margin-left: auto;
    align-self: stretch;
    display: flex;
    align-items: center;
    gap: 8px;
    color: #fff;
}
.tray svg {
    width: 16px;
    height: 16px;
}
.tray .chevron {
    width: 8px;
    height: 5px;
    margin-right: 4px;
}
.gap {
    width: 0;
}
.clock {
    margin: 0 1px 0 8px;
    line-height: 17px;
    text-align: center;
}
.show-desktop {
    align-self: stretch;
    width: 15px;
    border: 1px solid #56677c;
    background: linear-gradient(135deg, #9fb0c2, #5c6f84 60%, #8496aa);
}
.pointer {
    position: absolute;
    left: 467px;
    top: 731px;
    width: 13px;
    height: 20px;
}
```
